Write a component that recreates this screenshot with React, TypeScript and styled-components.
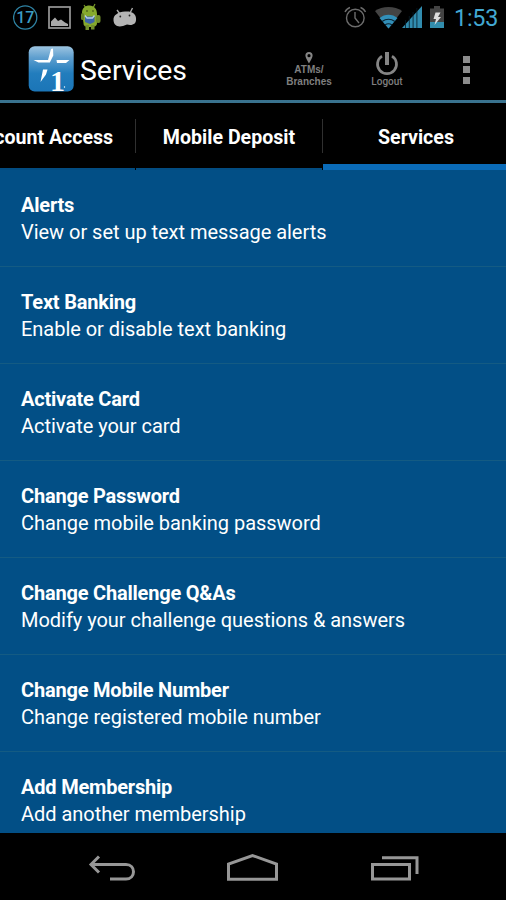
import React from 'react';
import styled, { createGlobalStyle } from 'styled-components';

const GlobalStyle = createGlobalStyle`
	* {
		box-sizing: border-box;
	}

	body {
		margin: 0;
		background: #000;
		font-family: Roboto, sans-serif;
	}
`;

const Screen = styled.div`
	display: flex;
	flex-direction: column;
	width: 506px;
	height: 900px;
	overflow: hidden;
	background: #000;
	color: #fff;
`;

const StatusBar = styled.div`
	display: flex;
	justify-content: space-between;
	height: 36px;
	flex: none;
	padding: 0 9px 0 13px;
`;

const StatusGroup = styled.div<{ $gap: number }>`
	display: flex;
	align-items: flex-start;
	gap: ${({ $gap }) => $gap}px;

	svg {
		display: block;
		flex: none;
	}
`;

const Clock = styled.time`
	width: 43px;
	margin-left: 1px;
	color: #42a8d2;
	font-size: 23.3px;
	letter-spacing: -0.2px;
	line-height: 37px;
	white-space: nowrap;
`;

const ActionBar = styled.header`
	display: flex;
	align-items: center;
	height: 67px;
	flex: none;
	padding: 3px 36px 0 28px;
	border-bottom: 3px solid #3f80a0;
	border-image: linear-gradient(#0f4567, #4c89a8 50%, #39728e) 1;

	svg {
		display: block;
		flex: none;
		overflow: visible;
	}
`;

const Title = styled.h1`
	margin: 2px 0 0 5px;
	width: 202px;
	font-size: 28.4px;
	font-weight: 400;
	line-height: 32px;
`;

const ActionButton = styled.button<{ $width: number }>`
	display: flex;
	flex-direction: column;
	align-items: center;
	width: ${({ $width }) => $width}px;
	height: 40px;
	margin-top: 5px;
	padding: 0;
	border: none;
	background: none;
	color: #7f7f7f;
	font: bold 10px/12px 'Liberation Sans', sans-serif;
	text-align: center;
`;

const LogoutLabel = styled.span`
	font: 500 10px/12px Roboto, sans-serif;
`;

const OverflowMenu = styled.button`
	display: flex;
	flex-direction: column;
	gap: 3.5px;
	margin: 0 0 0 auto;
	padding: 0;
	border: none;
	background: none;
`;

const OverflowDot = styled.span`
	width: 7px;
	height: 7px;
	background: #8c8c8c;
`;

const Tabs = styled.nav`
	display: flex;
	height: 67px;
	flex: none;
	margin-left: -51px;
`;

const Tab = styled.button<{ $active?: boolean }>`
	display: flex;
	align-items: center;
	justify-content: center;
	width: 186px;
	flex: none;
	padding: 9px 0 0;
	border: none;
	border-bottom: ${({ $active }) => $active ? '6px solid #0a6bb8' : '2px solid #024c81'};
	background: #000;
	color: #fff;
	font: 700 19.6px/24px Roboto, sans-serif;
	white-space: nowrap;

	span {
		margin-bottom: ${({ $active }) => $active ? 0 : 4}px;
	}
`;

const TabDivider = styled.i`
	width: 1px;
	height: 34px;
	flex: none;
	margin-top: 16px;
	background: #303030;
`;

const List = styled.ul`
	height: 663px;
	flex: none;
	margin: 0;
	padding: 0;
	overflow: hidden;
	background: #024f86;
	list-style: none;
`;

const ListRow = styled.li`
	height: 97px;
	padding: 22px 21px 0;
	border-bottom: 1px solid #145b83;
	font-size: 20px;
	line-height: 27px;
	white-space: nowrap;
`;

const RowTitle = styled.div`
	font-weight: 700;
	letter-spacing: -0.2px;
`;

const RowText = styled.div`
	letter-spacing: -0.03px;
`;

const NavBar = styled.footer`
	display: flex;
	align-items: flex-start;
	height: 67px;
	flex: none;
	padding: 20px 0 0 88px;

	svg {
		display: block;
		flex: none;
		fill: none;
		stroke: #979797;
		stroke-width: 3;
	}

	svg + svg {
		margin-left: 90px;
	}
`;

const services = [
	{ text: 'View or set up text message alerts', title: 'Alerts' },
	{ text: 'Enable or disable text banking', title: 'Text Banking' },
	{ text: 'Activate your card', title: 'Activate Card' },
	{ text: 'Change mobile banking password', title: 'Change Password' },
	{ text: 'Modify your challenge questions & answers', title: 'Change Challenge Q&As' },
	{ text: 'Change registered mobile number', title: 'Change Mobile Number' },
	{ text: 'Add another membership', title: 'Add Membership' }
];

const CountIcon = () => (
	<svg width='25' height='36' viewBox='0 0 25 36'>
		<circle cx='12.2' cy='17.5' r='11.6' fill='none' stroke='#2f83a4' strokeWidth='1.3' />
		<text x='12.3' y='23.3' textAnchor='middle' fontFamily='Roboto' fontSize='16' fontWeight='500' fill='#3c9dc2'>17</text>
	</svg>
);

const PictureIcon = () => (
	<svg width='23' height='36' viewBox='0 0 23 36'>
		<rect x='1' y='7' width='21' height='21' fill='none' stroke='#999' strokeWidth='1.7' />
		<path d='M3 26v-4.500l4-4 3 3.500 3-1.500 4 3 3 1.500v2z' fill='#aaa' />
	</svg>
);

const RobotIcon = () => (
	<svg width='21' height='36' viewBox='0 0 21 36'>
		<path d='M3 5l2 3M14 4l-2 4' stroke='#799a27' strokeWidth='1.2' />
		<path d='M1 13C1 8 4 5.500 8.500 5.500S16 9 16 14v9c0 3-2 4-7 4s-6.500-1-6.500-4z' fill='#86a92d' />
		<rect x='0' y='13' width='3' height='7' rx='1.5' fill='#657f27' />
		<rect x='15' y='15' width='4.500' height='8' rx='2' fill='#718d2b' />
		<path d='M4.500 25H8v5H4.500zM10 25h3.500v4.500H10z' fill='#738f2c' />
		<circle cx='6' cy='11' r='0.900' fill='#4d611c' />
		<circle cx='12' cy='11' r='0.900' fill='#4d611c' />
		<path d='M4 16.500h9.500v5.500l-4.500 2-5-2z' fill='#3c64a8' />
		<path d='M4 15.500l2 2.500h5.500l2-2.500' fill='none' stroke='#b6cdea' strokeWidth='1.300' />
	</svg>
);

const DroidHeadIcon = () => (
	<svg width='25' height='36' viewBox='0 0 25 36'>
		<path d='M5 10l3 4M20.500 8l-2.500 5' stroke='#aaa' strokeWidth='1.4' />
		<path d='M1.500 20.500C1 15 6 12 13 11.500s10.500 2 11 6.500c.5 5-2 7-6 7l-3-.5-4 1.500C5 27.500 2 25 1.500 20.500z' fill='#b4b4b4' />
		<circle cx='8.300' cy='16.500' r='0.900' fill='#222' />
		<circle cx='17.500' cy='15.500' r='0.900' fill='#222' />
	</svg>
);

const AlarmIcon = () => (
	<svg width='23' height='36' viewBox='0 0 23 36' fill='none' stroke='#6c6c6c' strokeWidth='1.4'>
		<circle cx='11.300' cy='18' r='8.800' />
		<path d='M11 12v6l4 5M1 12c1-2 3-4 5-4.500M21.500 12c-1-2-3-4-5-4.500' />
	</svg>
);

const WifiIcon = () => (
	<svg width='27' height='36' viewBox='0 0 27 36'>
		<path d='M0 11C7 5.500 20 5.500 27 11L13.500 28.500z' fill='#444' />
		<path d='M4.500 18c5-4.500 13-4.500 18 0l-9 10.500z' fill='#328fb8' />
		<path d='M7 21.500q6.500-4.500 13 0M10 25q3.500-2.500 7 0' fill='none' stroke='#0b2230' strokeWidth='1.100' />
	</svg>
);

const SignalIcon = () => (
	<svg width='20' height='36' viewBox='0 0 20 36'>
		<path d='M0 28L20 6v22z' fill='#318caf' />
		<path d='M3.500 20v8M7.300 16v12M11.100 12v16M14.900 8v20' stroke='#061c27' strokeWidth='0.800' />
	</svg>
);

const BatteryIcon = () => (
	<svg width='15' height='36' viewBox='0 0 15 36'>
		<path d='M4 6h6v2.500h4V28H0V8.500h4z' fill='#444' />
		<path d='M0 22h14v6H0z' fill='#328dad' />
		<path d='M5.500 12.500h5L8 17h3L4.500 25 6 19H3.500z' fill='#ddd' />
	</svg>
);

const BankLogo = () => (
	<svg width='47' height='48' viewBox='0 0 47 48'>
		<defs>
			<linearGradient id='logoFill' x1='0' y1='0' x2='0' y2='1'>
				<stop offset='0' stopColor='#9dc5e1' />
				<stop offset='0.250' stopColor='#5f9fcf' />
				<stop offset='0.600' stopColor='#227dbd' />
				<stop offset='1' stopColor='#1b75b7' />
			</linearGradient>
		</defs>
		<rect x='0.700' y='0.200' width='45' height='45.300' rx='6' fill='url(#logoFill)' />
		<path d='M20 14L23 3 25 2.500 25.300 9.500 21.800 16.500H10.500L5.500 14zM28.500 14H41.500L38 17H29zM15 23.500h4.500l-1.500 5-5.500 7.500z' fill='#fff' />
		<text x='22' y='44.500' fontFamily='Liberation Serif' fontSize='30' fontWeight='700' fill='#fff'>1</text>
		<circle cx='36.500' cy='41' r='0.700' fill='#fff' />
	</svg>
);

const PinIcon = () => (
	<svg width='8' height='12' viewBox='0 0 8 12'>
		<path d='M4 0a3.600 3.600 0 0 0-3.600 3.600C.4 6 4 11.500 4 11.500S7.600 6 7.600 3.600A3.600 3.600 0 0 0 4 0zm0 2.100a1.500 1.500 0 1 1 0 3.200 1.500 1.500 0 0 1 0-3.200z' fill='#858585' />
	</svg>
);

const PowerIcon = () => (
	<svg width='24' height='24' viewBox='0 0 24 24' fill='none' stroke='#858585'>
		<path d='M7 4.100a9.500 9.500 0 1 0 10 0' strokeWidth='2.700' />
		<path d='M12 0v13' strokeWidth='4' />
	</svg>
);

const App = () => (
	<>
		<GlobalStyle />
		<Screen>
			<StatusBar>
				<StatusGroup $gap={10}>
					<CountIcon />
					<PictureIcon />
					<RobotIcon />
					<DroidHeadIcon />
				</StatusGroup>
				<StatusGroup $gap={8}>
					<AlarmIcon />
					<StatusGroup $gap={0}>
						<WifiIcon />
						<SignalIcon />
					</StatusGroup>
					<BatteryIcon />
					<Clock>1:53</Clock>
				</StatusGroup>
			</StatusBar>
			<ActionBar>
				<BankLogo />
				<Title>Services</Title>
				<ActionButton $width={54}>
					<PinIcon />
					<span>ATMs/<br />Branches</span>
				</ActionButton>
				<ActionButton $width={102}>
					<PowerIcon />
					<LogoutLabel>Logout</LogoutLabel>
				</ActionButton>
				<OverflowMenu aria-label='More options'>
					<OverflowDot />
					<OverflowDot />
					<OverflowDot />
				</OverflowMenu>
			</ActionBar>
			<Tabs>
				<Tab><span>Account Access</span></Tab>
				<TabDivider />
				<Tab><span>Mobile Deposit</span></Tab>
				<TabDivider />
				<Tab $active><span>Services</span></Tab>
			</Tabs>
			<List>
				{services.map(({ text, title }) => (
					<ListRow key={title}>
						<RowTitle>{title}</RowTitle>
						<RowText>{text}</RowText>
					</ListRow>
				))}
			</List>
			<NavBar>
				<svg width='48' height='30' viewBox='0 0 48 30'>
					<path d='M3 11.500h35c10 0 10 14.500 0 14.500H22M11 3.500L3 11.500l8 8' />
				</svg>
				<svg width='53' height='30' viewBox='0 0 53 30'>
					<path d='M2.500 26.200V11L26.500 2.500 50.500 11v15.200z' />
				</svg>
				<svg width='50' height='30' viewBox='0 0 50 30'>
					<path d='M3.500 11.500h37v14.500h-37zM13 4.800h35V21' />
				</svg>
			</NavBar>
		</Screen>
	</>
);

export default App;
